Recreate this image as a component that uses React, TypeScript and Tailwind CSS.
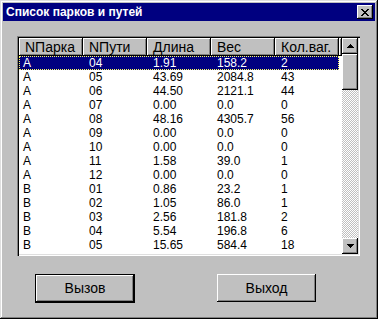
import React from "react";

const rows: string[][] = [
  ["A", "04", "1.91", "158.2", "2"],
  ["A", "05", "43.69", "2084.8", "43"],
  ["A", "06", "44.50", "2121.1", "44"],
  ["A", "07", "0.00", "0.0", "0"],
  ["A", "08", "48.16", "4305.7", "56"],
  ["A", "09", "0.00", "0.0", "0"],
  ["A", "10", "0.00", "0.0", "0"],
  ["A", "11", "1.58", "39.0", "1"],
  ["A", "12", "0.00", "0.0", "0"],
  ["B", "01", "0.86", "23.2", "1"],
  ["B", "02", "1.05", "86.0", "1"],
  ["B", "03", "2.56", "181.8", "2"],
  ["B", "04", "5.54", "196.8", "6"],
  ["B", "05", "15.65", "584.4", "18"],
];

const headers = ["NПарка", "NПути", "Длина", "Вес", "Кол.ваг."];

const raised =
  "shadow-[inset_-1px_-1px_0_#000,inset_1px_1px_0_#fff,inset_-2px_-2px_0_#808080]";

function Arrow({ down }: { down?: boolean }) {
  return (
    <svg width="7" height="4" viewBox="0 0 7 4" className={down ? "rotate-180" : ""}>
      <path d="M3 0h1v1h1v1h1v1h1v1H0V3h1V2h1V1h1z" fill="#000" />
    </svg>
  );
}

export default function App() {
  return (
    <div className="w-[378px] h-[319px] bg-[#c0c0c0] p-[3px] flex flex-col font-['Liberation_Sans',Arial,sans-serif] text-[12px] text-black shadow-[inset_-1px_-1px_0_#000,inset_1px_1px_0_#dfdfdf,inset_-2px_-2px_0_#808080,inset_2px_2px_0_#fff]">
      {/* title bar */}
      <div className="h-[18px] bg-[#000080] flex items-center justify-between pl-[3px] pr-[2px]">
        <span className="text-white font-bold text-[12px] leading-none">Список парков и путей</span>
        <button className={`w-[16px] h-[14px] bg-[#c0c0c0] flex items-center justify-center ${raised}`}>
          <svg width="8" height="7" viewBox="0 0 8 7">
            <path
              d="M0 0h2v1h1v1h2V1h1V0h2v1H7v1H6v1H5v1h1v1h1v1h1v1H6V6H5V5H3v1H2v1H0V6h1V5h1V4h1V3H2V2H1V1H0z"
              fill="#000"
            />
          </svg>
        </button>
      </div>

      {/* list view */}
      <div className="ml-[14px] mt-[15px] w-[343px] h-[220px] p-[2px] bg-white shadow-[inset_1px_1px_0_#808080,inset_2px_2px_0_#000,inset_-1px_-1px_0_#fff,inset_-2px_-2px_0_#dfdfdf] flex">
        <div className="flex-1 flex flex-col overflow-hidden">
          <div className="h-[18px] flex bg-[#c0c0c0] shrink-0 text-[14px]">
            {headers.map((h) => (
              <div key={h} className={`w-[64px] shrink-0 flex items-center pl-[6px] leading-none ${raised}`}>
                {h}
              </div>
            ))}
            <div className={`flex-1 ${raised}`} />
          </div>
          {rows.map((r, i) => (
            <div
              key={i}
              className={`h-[14px] shrink-0 flex items-center leading-none ${
                i === 0 ? "bg-[#000080] text-white outline-1 outline-dotted outline-[#ffff60] -outline-offset-1 w-[320px]" : ""
              }`}
            >
              {r.map((c, j) => (
                <div key={j} className={`w-[64px] shrink-0 ${j === 0 ? "pl-[4px]" : "pl-[6px]"}`}>
                  {c}
                </div>
              ))}
            </div>
          ))}
        </div>
        {/* scrollbar */}
        <div className="w-[16px] flex flex-col shrink-0 bg-[repeating-conic-gradient(#c0c0c0_0_25%,#fff_0_50%)] bg-[length:2px_2px]">
          <div className={`h-[16px] bg-[#c0c0c0] flex items-center justify-center ${raised}`}>
            <Arrow />
          </div>
          <div className={`h-[36px] bg-[#c0c0c0] ${raised}`} />
          <div className="flex-1" />
          <div className={`h-[16px] bg-[#c0c0c0] flex items-center justify-center ${raised}`}>
            <Arrow down />
          </div>
        </div>
      </div>

      {/* buttons */}
      <div className="flex mt-[18px] pl-[32px] gap-[82px] text-[14px]">
        <button className="w-[100px] h-[29px] border border-black flex items-center justify-center">
          <span className={`w-full h-full flex items-center justify-center ${raised}`}>Вызов</span>
        </button>
        <button className={`w-[99px] h-[28px] flex items-center justify-center ${raised}`}>Выход</button>
      </div>
    </div>
  );
}
